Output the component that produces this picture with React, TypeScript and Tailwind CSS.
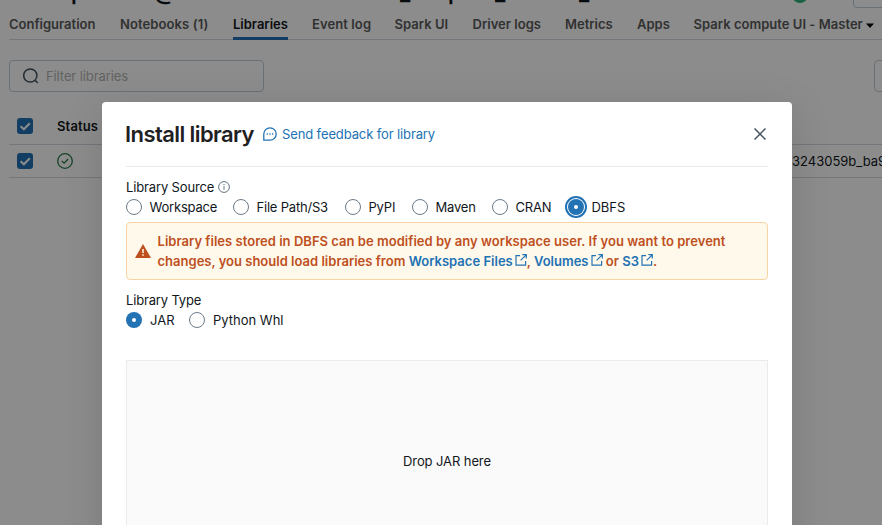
import React from "react";

const tabs = [
  { label: "Configuration", w: "w-[87px]" },
  { label: "Notebooks (1)", w: "w-[89px]", track: "tracking-[0.1px]" },
  { label: "Libraries", w: "w-[55px]", active: true },
  { label: "Event log", w: "w-[58.5px]", track: "tracking-[0.1px]" },
  { label: "Spark UI", w: "w-[54px]", track: "tracking-[0.05px]" },
  { label: "Driver logs", w: "w-[68.5px]", track: "tracking-[0.03px]" },
  { label: "Metrics", w: "w-[48px]" },
  { label: "Apps", w: "w-[32.5px]" },
  { label: "Spark compute UI - Master", w: "w-[181px]", track: "tracking-[0.03px]", caret: true },
];

const titleParts = [
  { text: "dana.", w: "w-[54px]" },
  { text: "quinn", w: "w-[91px]" },
  { text: "@", w: "w-[22px]" },
  { text: "databricks.com's run", w: "w-[224px]" },
  { text: "_", w: "w-[13px]" },
  { text: "Re", w: "w-[35px]" },
  { text: "pack", w: "w-[47px]" },
  { text: "_", w: "w-[13px]" },
  { text: "Cluster", w: "w-[71px]" },
  { text: "_", w: "w-[13px]" },
  { text: "2023-10-31-00-00", w: "w-[180px]" },
];

const sources = [
  { label: "Workspace", w: "w-[107px]" },
  { label: "File Path/S3", w: "w-[112px]" },
  { label: "PyPI", w: "w-[67px]" },
  { label: "Maven", w: "w-[80px]" },
  { label: "CRAN", w: "w-[76px]" },
  { label: "DBFS", w: "w-[60px]", checked: true, focus: true },
];

function Checkbox() {
  return (
    <div className="flex size-4 shrink-0 items-center justify-center rounded-[3px] bg-[#2272b4]">
      <svg width="16" height="16" viewBox="0 0 16 16" fill="none" stroke="#fff" strokeWidth="2">
        <path d="M3.6 8.2 L6.9 11.3 L12.8 5.3" />
      </svg>
    </div>
  );
}

function Radio({ checked, focus }: { checked?: boolean; focus?: boolean }) {
  return (
    <svg width="16" height="16" viewBox="0 0 16 16" className="shrink-0 overflow-visible">
      {focus && <circle cx="8" cy="8" r="10" fill="none" stroke="#2272b4" strokeWidth="2" />}
      {checked ? (
        <>
          <circle cx="8" cy="8" r="8" fill="#2272b4" />
          <circle cx="8" cy="8" r="2" fill="#fff" />
        </>
      ) : (
        <circle cx="8" cy="8" r="7.5" fill="#fff" stroke="#6b7b88" />
      )}
    </svg>
  );
}

function External() {
  return (
    <svg width="12" height="12" viewBox="0 0 12 12" fill="none" stroke="#2272b4" strokeWidth="1.2" className="ml-[2px] inline-block align-[0px]">
      <path d="M5 1.6H1v9.6h9.6V7M7.4 .7h3.9v3.9M11.2 .8L5.6 6.4" />
    </svg>
  );
}

function Link({ children }: { children: React.ReactNode }) {
  return (
    <a className="text-[#2272b4]">
      {children}
      <External />
    </a>
  );
}

export default function App() {
  return (
    <div className="relative h-[525px] w-[882px] overflow-hidden bg-white font-[Inter,'Liberation_Sans',sans-serif] text-[13px] leading-5 text-[#11171c]">
      <div className="flex h-full flex-col">
        <div className="relative h-2 shrink-0">
          <div className="absolute top-[-22px] left-[9px] flex text-[22px] leading-7 font-semibold tracking-[-0.7px] whitespace-nowrap">
            {titleParts.map((p, i) => (
              <span key={i} className={`shrink-0 ${p.w}`}>{p.text}</span>
            ))}
          </div>
          <div className="absolute top-[-13px] left-[792px] size-4 rounded-full bg-[#32b37c]" />
          <div className="absolute top-[-24px] left-[853px] h-8 w-20 rounded border border-[#c0cdd8] bg-white" />
        </div>
        <nav className="ml-[9px] flex h-8 shrink-0 gap-6 border-b border-[#d1d9e1] font-semibold text-[#5a5a5a]">
          {tabs.map((t) => (
            <div key={t.label} className={`relative h-8 shrink-0 pt-[6px] whitespace-nowrap ${t.w} ${t.track ?? ""} ${t.active ? "border-b-[3px] border-[#2272b4] text-[#11171c]" : ""}`}>
              {t.label}
              {t.caret && (
                <svg width="8" height="5" viewBox="0 0 8 5" className="ml-[3px] inline-block align-[1px]">
                  <path d="M0 .5h8L4 5z" fill="#000" />
                </svg>
              )}
            </div>
          ))}
        </nav>
        <div className="mt-5 ml-[9px] flex shrink-0 justify-between">
          <div className="flex h-8 w-[255px] items-center rounded border border-[#c0cdd8] pl-[13px]">
            <svg width="16" height="16" viewBox="0 0 16 16" fill="none" stroke="#44535f" strokeWidth="1.5">
              <circle cx="7.3" cy="7.5" r="6.6" />
              <path d="M11.8 12l3 3" />
            </svg>
            <span className="ml-[7px] tracking-[-0.1px] text-[#b4b4b4]">Filter libraries</span>
          </div>
          <div className="mr-[-20px] h-8 w-7 rounded border border-[#c0cdd8]" />
        </div>
        <div className="mt-4 ml-[9px] flex h-[37px] shrink-0 items-center border-b border-[#d1d9e1] pl-2">
          <Checkbox />
          <span className="ml-6 font-semibold tracking-[0.15px]">Status</span>
        </div>
        <div className="ml-[9px] flex h-[33px] shrink-0 items-center border-b border-[#d1d9e1] pl-2">
          <Checkbox />
          <svg width="16" height="16" viewBox="0 0 16 16" fill="none" stroke="#277c43" strokeWidth="1.3" className="ml-6 shrink-0">
            <circle cx="8" cy="8" r="7.3" />
            <path d="M4.8 8l2.3 2.2L11.2 6" />
          </svg>
          <span className="ml-[719px] shrink-0 whitespace-nowrap">3243059b_ba97</span>
        </div>
      </div>

      <div className="absolute inset-0 bg-black/45" />

      <div className="absolute top-[102px] left-[102px] flex h-[460px] w-[690px] flex-col rounded bg-white px-6 shadow-[0_8px_40px_rgba(0,0,0,0.13)]">
        <div className="flex h-16 shrink-0 items-center">
          <h2 className="ml-[-1px] w-[138px] text-[22px] leading-7 font-semibold tracking-[-0.58px] whitespace-nowrap text-[#1f2022]">Install library</h2>
          <svg width="14" height="14" viewBox="0 0 14 14" fill="none" stroke="#2272b4" strokeWidth="1.3">
            <path d="M.8 13.2V7A6.2 6.2 0 1 1 7 13.2z" />
            <path d="M3.7 7h1.2M6.4 7h1.2M9.1 7h1.2" />
          </svg>
          <span className="ml-[5px] tracking-[-0.12px] text-[#2272b4]">Send feedback for library</span>
          <svg width="12" height="12" viewBox="0 0 12 12" fill="none" stroke="#44535f" strokeWidth="1.5" className="mr-[2px] ml-auto">
            <path d="M.5.5l11 11M11.5.5l-11 11" />
          </svg>
        </div>
        <div className="h-px shrink-0 bg-[#ebebeb]" />
        <div className="mt-[10px] flex h-5 shrink-0 items-center">
          <span className="tracking-[-0.14px]">Library Source</span>
          <svg width="12" height="12" viewBox="0 0 12 12" fill="none" stroke="#5f7281" className="ml-1">
            <circle cx="6" cy="6" r="5.4" />
            <path d="M6 5.2v3.6M6 3v1.2" />
          </svg>
        </div>
        <div className="flex h-5 shrink-0 items-center tracking-[-0.2px]">
          {sources.map((s) => (
            <label key={s.label} className={`flex items-center whitespace-nowrap ${s.w} ${s.focus ? "gap-[7.5px] tracking-[-0.05px]" : "gap-[7.5px]"}`}>
              <Radio checked={s.checked} focus={s.focus} />
              {s.label}
            </label>
          ))}
        </div>
        <div className="mt-[5px] flex h-[58px] shrink-0 items-center rounded border border-[#f8d4a5] bg-[#fff9eb] pl-2 font-semibold text-[#be501e]">
          <svg width="16" height="14" viewBox="0 0 16 14">
            <path d="M8 0l8 14H0z" fill="#be501e" />
            <path d="M8 5v4M8 10.3v1.5" stroke="#fff9eb" strokeWidth="1.5" />
          </svg>
          <p className="ml-[6.5px] tracking-[0.025px] whitespace-nowrap">
            Library files stored in DBFS can be modified by any workspace user. If you want to prevent
            <br />
            <span className="tracking-[0.01px]">
              changes, you should load libraries from <Link>Workspace Files</Link>, <Link>Volumes</Link> or <Link>S3</Link>.
            </span>
          </p>
        </div>
        <div className="mt-[10px] h-5 shrink-0 tracking-[-0.16px]">Library Type</div>
        <div className="flex h-5 shrink-0 items-center">
          <label className="flex w-[63px] items-center gap-2"><Radio checked />JAR</label>
          <label className="flex items-center gap-2"><Radio />Python Whl</label>
        </div>
        <div className="mt-[30px] flex h-[202px] shrink-0 items-center justify-center border border-[#ebebeb] bg-[#fafafa] tracking-[-0.1px]">
          Drop JAR here
        </div>
      </div>
    </div>
  );
}
